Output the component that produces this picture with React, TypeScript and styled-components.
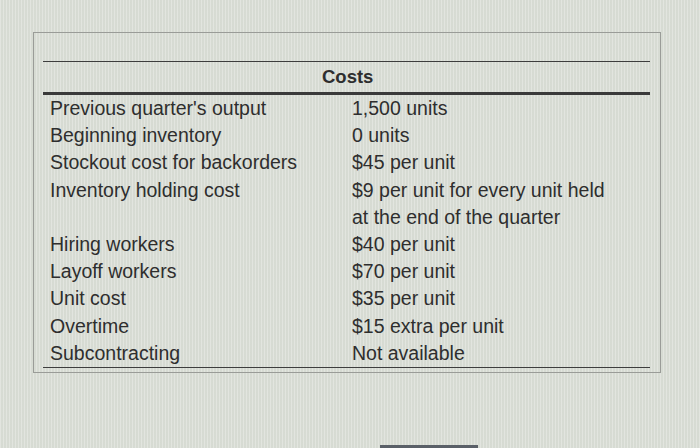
import styled, { createGlobalStyle } from 'styled-components';

const GlobalStyle = createGlobalStyle`
	html, body {
		margin: 0;
		padding: 0;
	}
	body {
		font-family: 'Liberation Sans', Arial, sans-serif;
		background: #dcdfd8;
	}
`;

interface Row {
	label: string;
	value: string[];
}

const rows: Row[] = [
	{ label: "Previous quarter's output", value: ['1,500 units'] },
	{ label: 'Beginning inventory', value: ['0 units'] },
	{ label: 'Stockout cost for backorders', value: ['$45 per unit'] },
	{ label: 'Inventory holding cost', value: ['$9 per unit for every unit held', 'at the end of the quarter'] },
	{ label: 'Hiring workers', value: ['$40 per unit'] },
	{ label: 'Layoff workers', value: ['$70 per unit'] },
	{ label: 'Unit cost', value: ['$35 per unit'] },
	{ label: 'Overtime', value: ['$15 extra per unit'] },
	{ label: 'Subcontracting', value: ['Not available'] },
];

const App = () => {
	return (
		<>
			<GlobalStyle />
			<Page>
				<Frame>
					<Table>
						<HeaderRow>
							<span />
							<HeaderCell>Costs</HeaderCell>
						</HeaderRow>
						<Body>
							{rows.map((row) => (
								<BodyRow key={row.label}>
									<Label>{row.label}</Label>
									<Value>
										{row.value.map((line) => (
											<div key={line}>{line}</div>
										))}
									</Value>
								</BodyRow>
							))}
						</Body>
					</Table>
				</Frame>
				<Footer>
					<Tab />
				</Footer>
			</Page>
		</>
	);
};

export default App;

const Page = styled.div`
	width: 700px;
	height: 448px;
	overflow: hidden;
	display: flex;
	flex-direction: column;
	background:
		repeating-linear-gradient(90deg, rgba(255, 255, 255, 0.18) 0 1px, rgba(150, 170, 150, 0.08) 1px 3px),
		#dcdfd8;
`;

const Frame = styled.div`
	margin: 32px 0 0 33px;
	width: 628px;
	height: 341px;
	box-sizing: border-box;
	border: 1px solid #9a9c98;
	padding: 28px 10px 0 9px;
`;

const Table = styled.div`
	border-top: 1.5px solid #3e3e3e;
	color: #2e2e2e;
	font-size: 19.5px;
`;

const HeaderRow = styled.div`
	display: grid;
	grid-template-columns: 309px 1fr;
	height: 30px;
	align-items: center;
	border-bottom: 3px solid #3a3a3a;
`;

const HeaderCell = styled.div`
	font-weight: bold;
	font-size: 18.5px;
	margin-left: -30px;
`;

const Body = styled.div`
	border-bottom: 1.5px solid #3e3e3e;
`;

const BodyRow = styled.div`
	display: grid;
	grid-template-columns: 309px 1fr;
	line-height: 27.2px;
`;

const Label = styled.div`
	padding-left: 7px;
`;

const Value = styled.div``;

const Footer = styled.div`
	margin-top: auto;
	height: 3px;
	display: flex;
`;

const Tab = styled.div`
	margin-left: 380px;
	width: 98px;
	background: #5a6068;
`;
